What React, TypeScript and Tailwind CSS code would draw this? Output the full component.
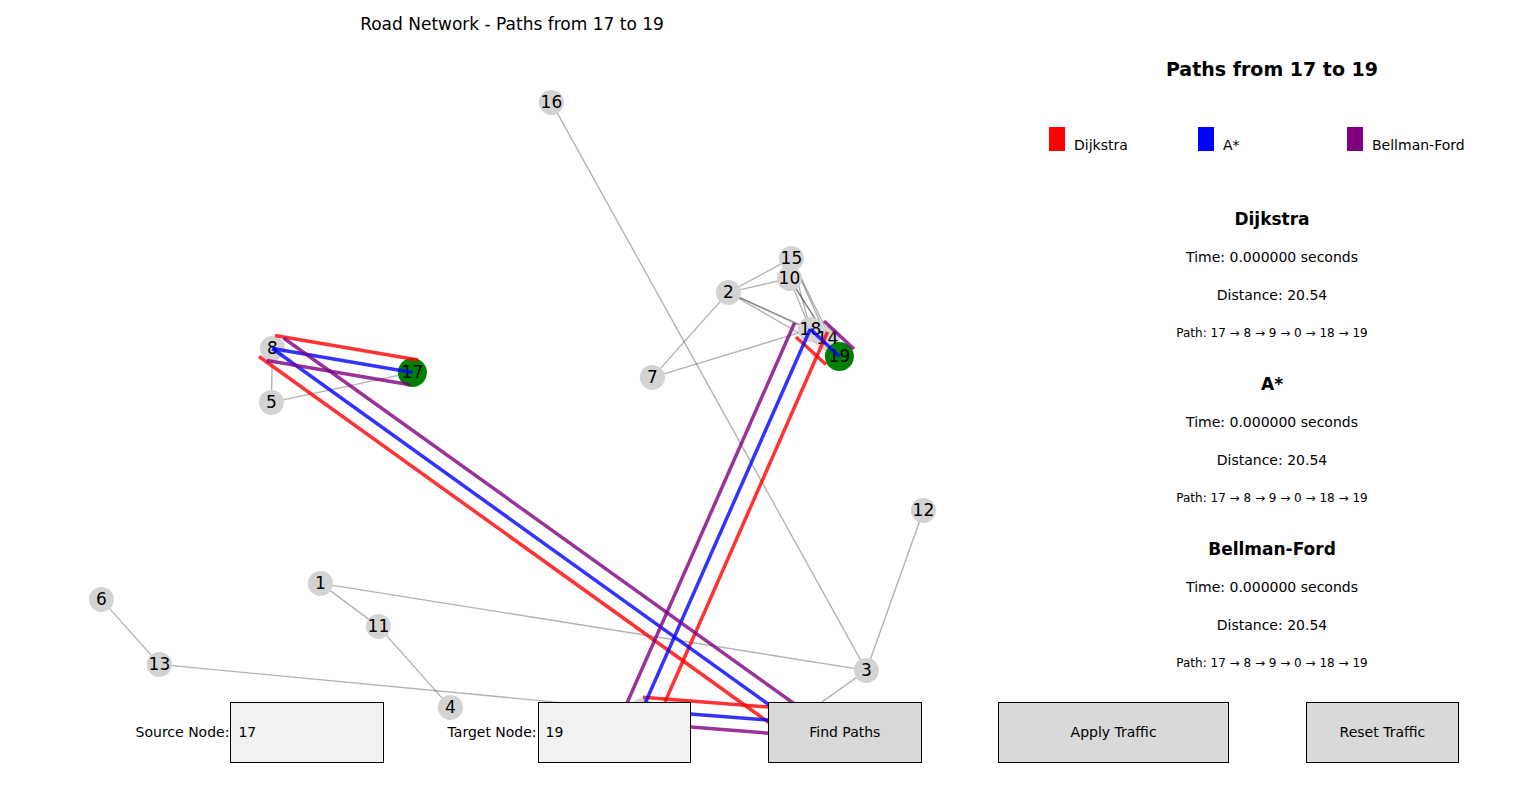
import { useState } from "react";

type Point = [number, number];

const nodes: Record<number, Point> = {
  0: [642, 710],
  1: [320, 583],
  2: [728, 292],
  3: [866, 670],
  4: [450, 707],
  5: [271, 402],
  6: [101, 599],
  7: [652, 377],
  8: [272, 348],
  9: [793, 722],
  10: [789, 278],
  11: [378, 626],
  12: [923, 510],
  13: [159, 664],
  14: [827, 338],
  15: [791, 258],
  16: [551, 102],
  17: [412, 372],
  18: [810, 329],
  19: [839, 356],
};

const roads: Point[] = [
  [16, 3], [12, 3], [1, 3], [1, 11], [11, 4], [6, 13], [13, 0], [3, 9],
  [8, 5], [5, 17], [2, 15], [2, 10], [2, 18], [2, 14], [2, 19], [2, 7], [7, 18],
  [15, 18], [15, 14], [15, 19], [10, 18], [10, 14], [10, 19], [15, 10],
];

const paths = [
  {
    name: "Dijkstra",
    swatch: "bg-[#ff0000]",
    color: "#ff0000",
    segments: [
      [275, 335.5, 418, 360], [259, 356.5, 780, 730.5], [643, 697.3, 794, 709],
      [665, 702, 827.5, 332], [796, 337, 826, 364.5],
    ],
  },
  {
    name: "A*",
    swatch: "bg-[#0000ff]",
    color: "#0000ff",
    segments: [
      [412.5, 372.4, 272.3, 348.5], [272.3, 348.5, 793, 722], [793, 722, 642, 710.3],
      [642, 710.3, 810.3, 329], [810.3, 329, 839.5, 356.5],
    ],
  },
  {
    name: "Bellman-Ford",
    swatch: "bg-[#800080]",
    color: "#800080",
    segments: [
      [410, 384.7, 267, 360.5], [283.5, 338, 805, 711.5], [792, 735, 640, 723],
      [627, 703, 794.5, 323], [824, 321, 854, 349],
    ],
  },
];

function RoadMap() {
  return (
    <svg viewBox="0 0 1024 750" className="block w-full" role="img" aria-label="Road network">
      <g transform="translate(0.4 0.4)">
        <g stroke="#000000" strokeOpacity="0.3" strokeWidth="1.4">
          {roads.map(([a, b]) => (
            <line key={`${a}-${b}`} x1={nodes[a][0]} y1={nodes[a][1]} x2={nodes[b][0]} y2={nodes[b][1]} />
          ))}
        </g>
        {Object.entries(nodes).map(([id, [x, y]]) => {
          const endpoint = id === "17" || id === "19";
          return (
            <circle key={id} cx={x} cy={y} r={endpoint ? 14.5 : 12.5} fill={endpoint ? "#008000" : "#d3d3d3"} />
          );
        })}
        <g fontSize="17" textAnchor="middle" fill="#000000">
          {Object.entries(nodes).map(([id, [x, y]]) => (
            <text key={id} x={x} y={y + 6}>{id}</text>
          ))}
        </g>
      </g>
      {paths.map((path) => (
        <g key={path.name} stroke={path.color} strokeOpacity="0.8" strokeWidth="3.5">
          {path.segments.map(([x1, y1, x2, y2]) => (
            <line key={`${x1}-${y1}`} x1={x1} y1={y1} x2={x2} y2={y2} />
          ))}
        </g>
      ))}
    </svg>
  );
}

function NodeField({ id, label, initial }: { id: string; label: string; initial: string }) {
  const [value, setValue] = useState(initial);
  return (
    <div className="col-span-4 grid grid-cols-2 items-center">
      <label htmlFor={id} className="pr-px pb-[2px] text-right whitespace-nowrap">{label}</label>
      <input
        id={id}
        value={value}
        onChange={(event) => setValue(event.target.value)}
        className="h-[61px] w-full border border-black bg-[#f1f1f1] px-[7px] pb-[2px] outline-none"
      />
    </div>
  );
}

const buttonStyle = "h-[61px] border border-black bg-[#d9d9d9] pb-[2px] hover:bg-[#f1f1f1]";

export default function App() {
  return (
    <div className="bg-white font-['DejaVu_Sans',sans-serif] text-sm text-black">
      <main className="grid grid-cols-3">
        <section className="col-span-2 grid">
          <h1 className="z-10 col-start-1 row-start-1 pt-3 text-center text-[17px] leading-6">
            Road Network - Paths from 17 to 19
          </h1>
          <div className="col-start-1 row-start-1">
            <RoadMap />
          </div>
        </section>
        <aside className="pt-[55px] pr-4">
          <h2 className="text-center text-[19px] leading-7 font-bold">Paths from 17 to 19</h2>
          <ul className="mt-11 grid grid-cols-[149px_149px_1fr] pl-[25px]">
            {paths.map((path) => (
              <li key={path.name} className="flex gap-[9px]">
                <span className={`h-6 w-4 ${path.swatch}`} />
                <span className="pt-2 leading-5">{path.name}</span>
              </li>
            ))}
          </ul>
          <div className="mt-[54px] grid gap-[31px] text-center">
            {paths.map((path) => (
              <article key={path.name} className="grid gap-[18px] leading-5">
                <h3 className="text-[17px] leading-5 font-bold">{path.name}</h3>
                <p>Time: 0.000000 seconds</p>
                <p>Distance: 20.54</p>
                <p className="text-[12px] leading-5">Path: 17 → 8 → 9 → 0 → 18 → 19</p>
              </article>
            ))}
          </div>
        </aside>
      </main>
      <form
        className="relative z-10 -mt-12 grid grid-cols-20 pb-10"
        onSubmit={(event) => event.preventDefault()}
      >
        <div className="col-span-1" />
        <NodeField id="source" label="Source Node:" initial="17" />
        <NodeField id="target" label="Target Node:" initial="19" />
        <button type="submit" className={`col-span-2 col-start-11 ${buttonStyle}`}>Find Paths</button>
        <button type="button" className={`col-span-3 col-start-14 ${buttonStyle}`}>Apply Traffic</button>
        <button type="button" className={`col-span-2 col-start-18 ${buttonStyle}`}>Reset Traffic</button>
      </form>
    </div>
  );
}
